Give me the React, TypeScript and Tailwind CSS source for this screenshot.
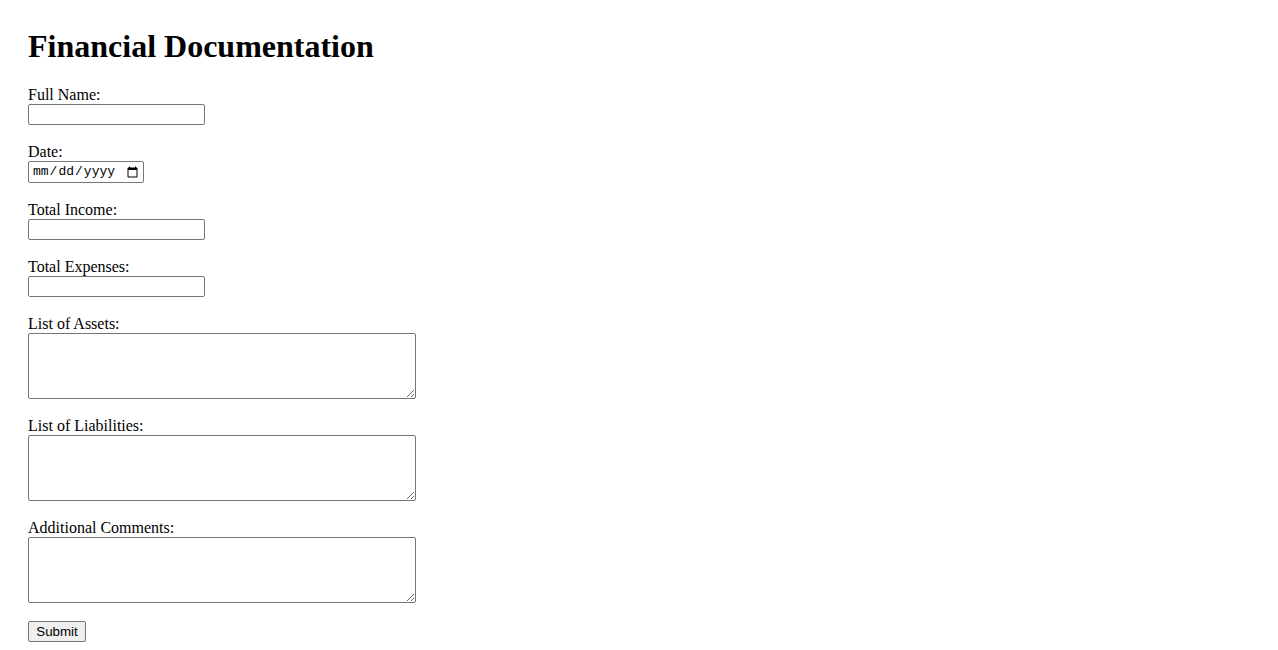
import React from "react";

const serif = "font-['Liberation_Serif','Times_New_Roman',serif]";

function Field({ label, children }: { label: string; children: React.ReactNode }) {
  return (
    <div className="flex flex-col items-start mb-[18px]">
      <label className="block text-[16px] leading-[18px] text-black">{label}</label>
      {children}
    </div>
  );
}

export default function App() {
  const inputCls =
    "block w-[177px] h-[21px] border border-[#767676] rounded-[2px] bg-white px-[2px] text-[13px] font-['Liberation_Sans',Arial,sans-serif] outline-none";
  const areaCls =
    "block w-[388px] h-[66px] border border-[#767676] rounded-[2px] bg-white px-[2px] text-[13px] font-['Liberation_Mono',monospace] outline-none resize";
  return (
    <div className={`min-h-[650px] bg-white pl-[28px] pt-[28px] ${serif} text-black`}>
      <h1 className="text-[32px] leading-[37px] font-bold mb-[21px]">Financial Documentation</h1>
      <form onSubmit={(e) => e.preventDefault()}>
        <Field label="Full Name:">
          <input type="text" className={inputCls} />
        </Field>
        <Field label="Date:">
          <input
            type="date"
            className="block w-[116px] h-[22px] border border-[#767676] rounded-[2px] bg-white pl-[3px] pr-[2px] text-[13px] font-['Liberation_Mono',monospace] outline-none"
          />
        </Field>
        <Field label="Total Income:">
          <input type="text" className={inputCls} />
        </Field>
        <Field label="Total Expenses:">
          <input type="text" className={inputCls} />
        </Field>
        <Field label="List of Assets:">
          <textarea className={areaCls} />
        </Field>
        <Field label="List of Liabilities:">
          <textarea className={areaCls} />
        </Field>
        <Field label="Additional Comments:">
          <textarea className={areaCls} />
        </Field>
        <button
          type="submit"
          className="block w-[58px] h-[21px] border border-[#767676] rounded-[2px] bg-[#efefef] text-[13.33px] leading-[19px] font-['Liberation_Sans',Arial,sans-serif] text-black"
        >
          Submit
        </button>
      </form>
    </div>
  );
}
